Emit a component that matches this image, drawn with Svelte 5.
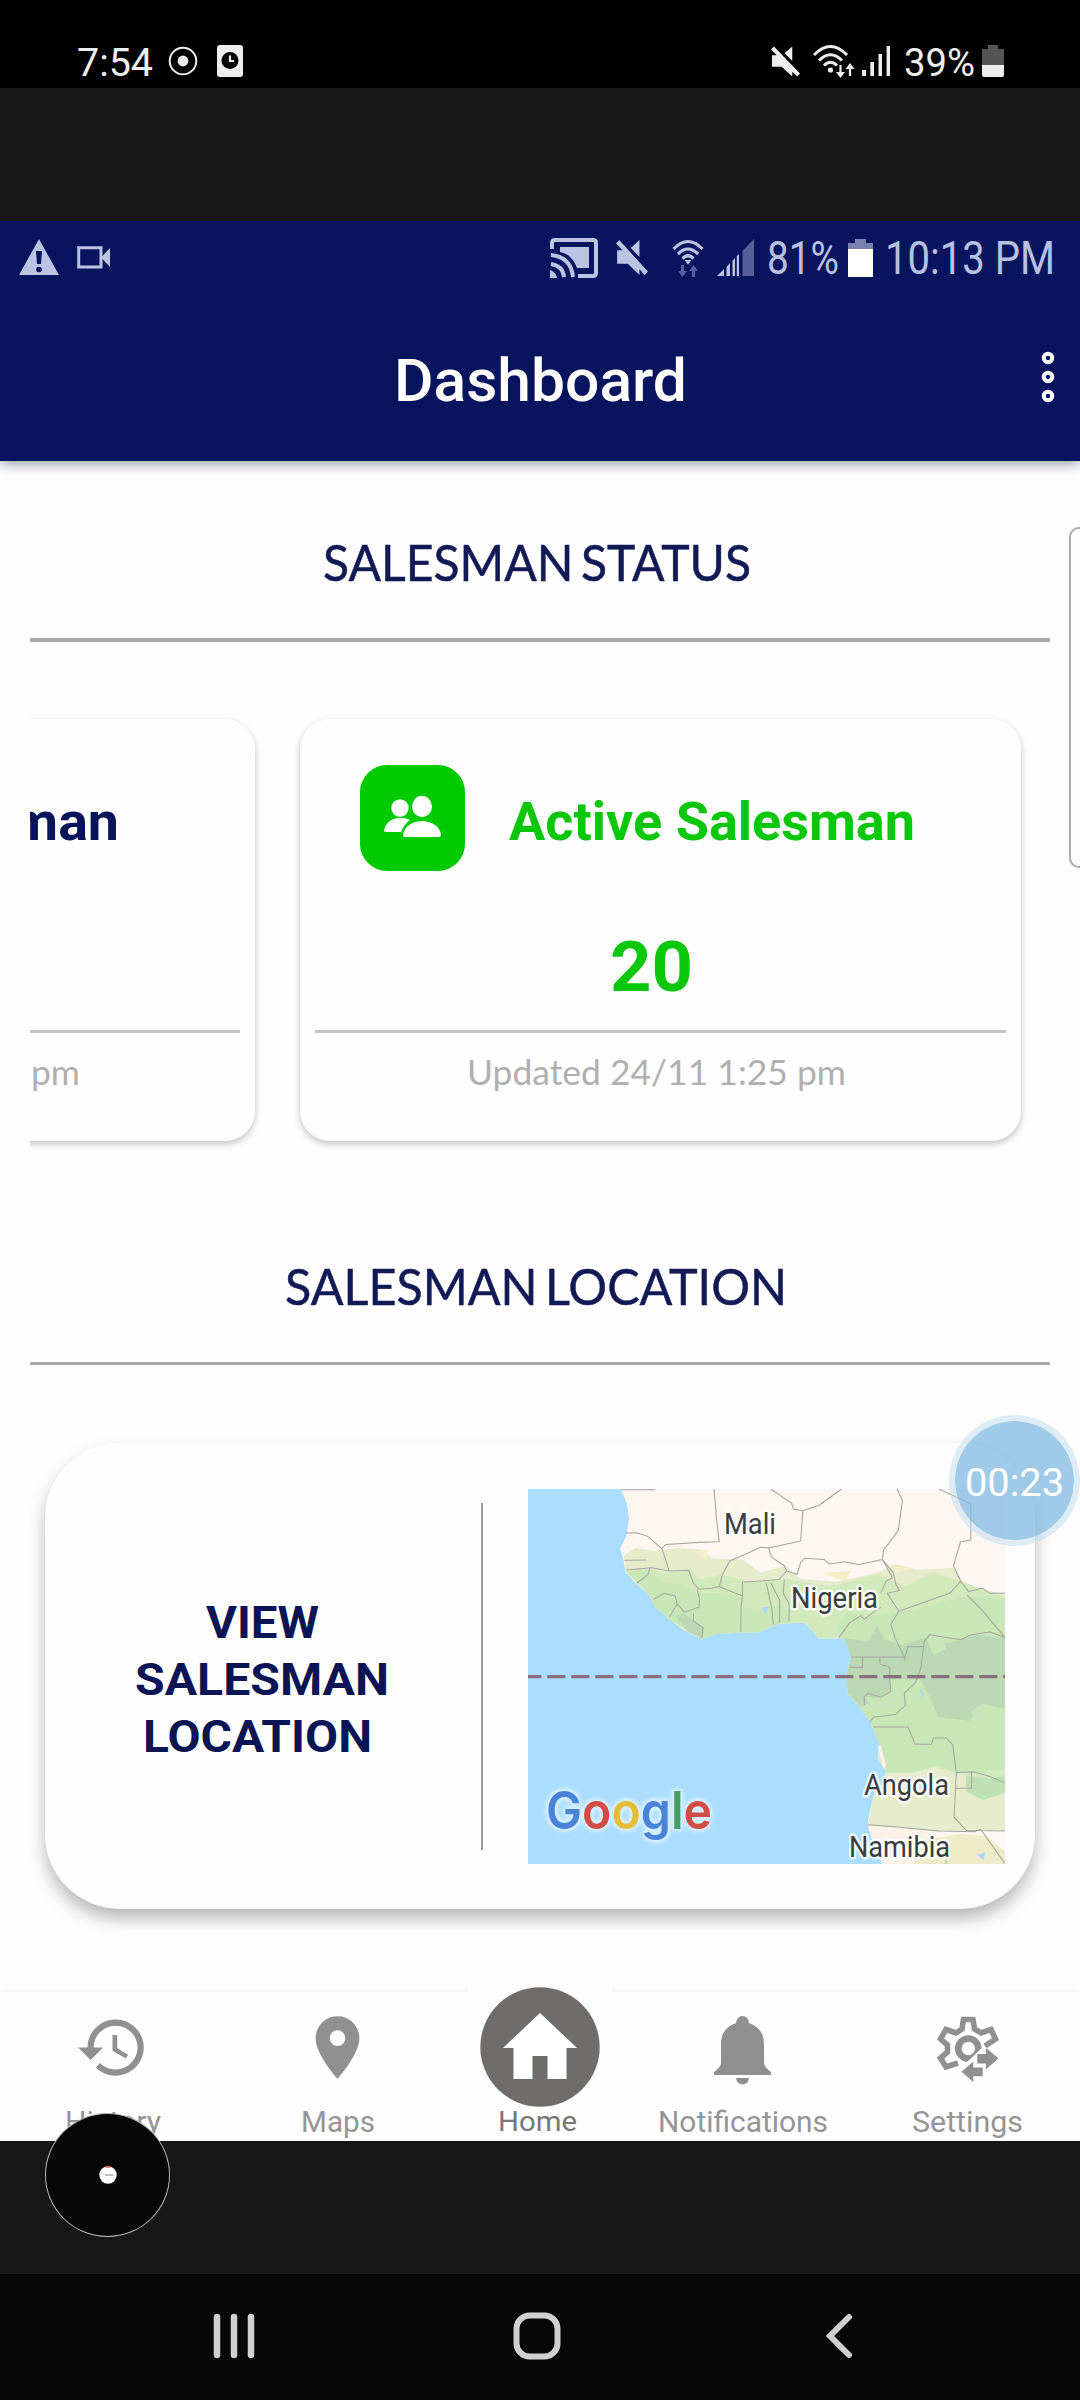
<script>
  const mutePath = 'M1 4 4 1 31 29 28 32 23 27 23 32 12 22 2 22 2 10 7 10ZM23 1 23 16 15 8Z';
</script>

{#snippet fitted(text, width, size)}
  <svg class="fitted" {width} height={Math.round(size * 1.2)}>
    <text x="0" y={size * 0.95} font-size={size} textLength={width} lengthAdjust="spacingAndGlyphs">{text}</text>
  </svg>
{/snippet}

<div class="screen">
  <header class="device-status">
    <div class="left">
      {@render fitted('7:54', 76, 39)}
      <svg class="record" width="30" height="30" viewBox="0 0 30 30">
        <circle cx="15" cy="15" r="13.3" fill="none" stroke="#eee" stroke-width="2" />
        <circle cx="15" cy="15" r="5.4" fill="#eee" />
      </svg>
      <svg class="clock" width="26" height="32" viewBox="0 0 26 32">
        <rect width="26" height="32" rx="3" fill="#eee" />
        <circle cx="13" cy="15.5" r="8.5" fill="#000" />
        <path d="M13 10.5V16H17" fill="none" stroke="#eee" stroke-width="2.2" />
      </svg>
    </div>
    <div class="right">
      <svg width="31" height="33" viewBox="0 0 32 33"><path d={mutePath} fill="#eee" /></svg>
      <svg class="wifi" width="42" height="33" viewBox="0 0 42 33" fill="none" stroke="#eee" stroke-width="3">
        <path d="M1 10Q17.500-7 34 10M6 15.500Q17.500 4 29 15.500M11 20.500Q17.500 14 24 20.500" />
        <circle cx="17.500" cy="25" r="2.600" fill="#eee" stroke="none" />
        <path d="M27.500 20V29M37 31V22" stroke-width="2.200" />
        <path d="M23 27H32L27.500 33ZM32.500 24H41.500L37 18Z" fill="#eee" stroke="none" />
      </svg>
      <svg class="bars" width="29" height="32" viewBox="0 0 29 32">
        <path d="M0 25H4V31H0ZM8.300 17H12V31H8.300ZM16.500 9H20V31H16.500ZM24.600 1H28V31H24.600Z" fill="#eee" />
      </svg>
      {@render fitted('39%', 71, 39)}
      <svg class="battery" width="22" height="34" viewBox="0 0 22 34">
        <path d="M6 1H16V5H22V21H0V5H6Z" fill="#555" />
        <path d="M0 21H22V31Q22 33 20 33H2Q0 33 0 31Z" fill="#eee" />
      </svg>
    </div>
  </header>

  <div class="letterbox top"></div>

  <main class="app">
    <div class="app-bar">
      <div class="inner-status">
        <div class="left">
          <svg width="40" height="37" viewBox="0 0 40 37">
            <path d="M20 0 40 36H0Z" fill="#bbc3e2" />
            <path d="M17 12H23L22 25H18Z" fill="#09145f" />
            <circle cx="20" cy="30.500" r="2.800" fill="#09145f" />
          </svg>
          <svg class="camera" width="33" height="23" viewBox="0 0 33 23">
            <path d="M1.700 1.700H24V21H1.700Z" fill="none" stroke="#bbc3e2" stroke-width="3" />
            <path d="M24 11.500 33 2V21Z" fill="#bbc3e2" />
          </svg>
        </div>
        <div class="right">
          <svg width="48" height="40" viewBox="0 0 48 40" fill="none" stroke="#bbc3e2" stroke-width="4">
            <path d="M2 11V5Q2 2 5 2H43Q46 2 46 5V35Q46 38 43 38H28" />
            <path d="M10 9H39V30H27Q22 16 10 14Z" fill="#bbc3e2" stroke="none" />
            <path d="M1 17Q21 19 23 39M1 26Q13 28 14 39" />
            <path d="M0 32Q6 34 7 40H0Z" fill="#bbc3e2" stroke="none" />
          </svg>
          <svg class="mute" width="34" height="37" viewBox="0 0 32 33" preserveAspectRatio="none">
            <path d={mutePath} fill="#bbc3e2" />
          </svg>
          <svg class="wifi-in" width="32" height="38" viewBox="0 0 32 38" fill="none" stroke="#bbc3e2" stroke-width="3.200">
            <path d="M1.500 10Q16-5 30.500 10M6 15Q16 5 26 15M10.500 19.500Q16 14 21.500 19.500" />
            <path d="M12.500 21H19.500L16 25.500Z" fill="#bbc3e2" stroke="none" />
            <g fill="#56609a" stroke="none">
              <path d="M9 26H12V32H15L10.500 38 6 32H9ZM20 38H23V32H26L21.500 26 17 32H20Z" />
            </g>
          </svg>
          <svg class="bars-in" width="38" height="38" viewBox="0 0 38 38">
            <path d="M0 37 7 30V37ZM9.500 28 13 24V37H9.500ZM15.500 22 18 19V37H15.500ZM19.800 17 22 15V37H19.800Z" fill="#bbc3e2" />
            <path d="M25.500 12 37 0V37H25.500Z" fill="#566098" />
          </svg>
          <span class="pct">{@render fitted('81%', 72, 46)}</span>
          <svg class="battery-in" width="25" height="38" viewBox="0 0 25 38">
            <path d="M7 0H18V4H25V11H0V4H7Z" fill="#7780af" />
            <path d="M0 10H25V38H0Z" fill="#fff" />
          </svg>
          {@render fitted('10:13 PM', 170, 46)}
        </div>
      </div>
      <div class="title-row">
        <h1>{@render fitted('Dashboard', 293, 60)}</h1>
        <svg class="kebab" width="14" height="52" viewBox="0 0 14 52" fill="#09145f" stroke="#fff" stroke-width="4">
          <circle cx="7" cy="7" r="4.200" /><circle cx="7" cy="26" r="4.200" /><circle cx="7" cy="45" r="4.200" />
        </svg>
      </div>
    </div>

    <section class="status">
      <h2>{@render fitted('SALESMAN STATUS', 428, 50)}</h2>
      <hr class="thick" />
      <div class="carousel">
        <article class="card">
          <div class="card-head previous">{@render fitted('Salesman', 246, 53)}</div>
          <div class="count"></div>
          <hr />
          <p class="updated previous">{@render fitted('Updated 24/11 1:25 pm', 379, 35)}</p>
        </article>
        <article class="card active">
          <div class="card-head">
            <div class="badge">
              <svg width="58" height="44" viewBox="0 0 58 44" fill="#fff">
                <circle cx="16" cy="13" r="8.700" />
                <path d="M0 36C1 27 10 22 18 23Q23 23 26 25Q20 29 17 37H3Q0 37 0 36Z" />
                <ellipse cx="38" cy="11.500" rx="10" ry="10.700" />
                <path d="M19 40C20 31 29 26 38 26S56 31 57 40Q57 42 54 42H22Q19 42 19 40Z" />
              </svg>
            </div>
            {@render fitted('Active Salesman', 406, 53)}
          </div>
          <div class="count">{@render fitted('20', 83, 71)}</div>
          <hr />
          <p class="updated">{@render fitted('Updated 24/11 1:25 pm', 379, 35)}</p>
        </article>
      </div>
    </section>

    <section class="location">
      <h2>{@render fitted('SALESMAN LOCATION', 502, 50)}</h2>
      <hr class="medium" />
      <div class="location-card">
        <div class="view">
          {@render fitted('VIEW', 113, 45)}
          {@render fitted('SALESMAN', 254, 45)}
          <span class="nudge">{@render fitted('LOCATION', 229, 45)}</span>
        </div>
        <div class="rule"></div>
        <svg class="map" width="477" height="375" viewBox="0 0 477 375">
          <rect width="477" height="375" fill="#abddff" />
          <g transform="scale(.36357 .34435) translate(-50 -257)">
            <path fill="#fdf6f1" d="M306 257L322 300 328 345 320 395 303 430 312 460 318 497 350 535 380 558 400 600 440 635 480 668 527 692 570 678 640 674 690 672 740 648 810 645 830 665 850 692 915 690 935 715 938 745 925 800 930 850 965 895 990 930 1018 1000 1012 1040 1035 1075 1030 1110 1000 1150 985 1220 1000 1290 1025 1346H1362V257Z" />
            <path fill="#e6eccb" d="M313 450L345 428 400 437 455 428 520 432 560 458 640 462 690 500 760 480 800 518 900 526 1010 500 1060 475 1120 492 1220 486 1245 525 1300 552 1362 560V1250L1280 1245 1180 1252 1050 1238 985 1235 1000 1150 1030 1110 1035 1075 1012 1040 1018 1000 990 930 965 895 930 850 925 800 938 745 935 715 915 690 850 692 830 665 810 645 740 648 690 672 640 674 570 678 527 692 480 668 440 635 400 600 380 558 350 535 318 497Z" />
            <path fill="#d2e9bc" d="M318 495L370 486 430 502 500 493 520 520 580 505 660 526 770 520 880 540 1010 505 1090 540 1160 500 1240 525 1362 570V1120L1230 1080 1140 1060 1035 1080 1018 1000 990 930 965 895 930 850 925 800 938 745 935 715 915 690 850 692 830 665 810 645 740 648 690 672 570 678 527 692 440 635 400 600 380 558Z" />
            <path fill="#c8e6b6" d="M325 500L375 492 420 530 475 535 520 560 590 560 645 575 640 600 690 610 750 590 770 640 740 648 690 672 570 678 527 692 440 635 400 600 380 558ZM900 660L930 610 960 632 1040 620 1120 605 1240 570 1362 575V1070L1230 1085 1180 1060 1110 1080 1035 1080 1018 1000 990 930 965 895 930 850 925 800 938 745 935 715 915 690Z" />
            <path fill="#bbd8b4" d="M920 690L985 700 1010 655 1030 695 1080 710 1140 690 1210 705 1280 680 1362 690V895L1300 880 1265 930 1180 920 1150 850 1130 810 1045 810 1045 845 1020 862 965 890 930 850 925 800 938 745ZM455 625L480 620 532 660 527 690 490 672Z" />
            <path fill="#cbe5ba" d="M1145 690L1190 675 1200 720 1165 740ZM1270 900L1308 878 1295 920 1275 935ZM1050 815L1085 850 1080 890 1025 900 1000 895 975 860 1020 865 1045 845ZM1160 920L1165 940 1155 950ZM1250 945L1268 960 1258 972Z" />
            <path fill="#bfdfb4" d="M1255 1090L1320 1100 1362 1090V1140L1300 1160 1255 1135Z" />
            <path fill="#fcf2e8" d="M985 1235L1050 1240 1150 1252 1120 1346H1025L1000 1290ZM1012 1005L1020 1000 1035 1060 1028 1070Z" />
            <path fill="#eeebc9" d="M1150 1275L1240 1258 1310 1265 1362 1310V1346H1110Z" />
            <path fill="#f6edc9" d="M510 440L545 432 540 465ZM1045 480L1110 488 1060 500ZM860 500L940 495 920 525Z" />
            <path fill="#a9d9fb" d="M693 602L712 598 705 620ZM1128 838L1140 850 1135 868ZM1285 1320L1308 1312 1303 1335Z" />
            <g fill="none" stroke="#a5a89f" stroke-width="3" stroke-linejoin="round">
              <path d="M306 259H400M562 257L568 340 576 410 520 412 430 418 418 430 380 395 350 384 318 385M418 430L428 460 438 495 492 493 505 530 520 548 555 545 575 540 640 568 636 600 635 672M576 542L585 505 605 466 640 450 690 426 712 428 800 408 806 320 780 315 775 298 718 257M806 320L850 305 912 257M712 428L720 455 755 480 762 495 740 520 640 528 640 568M762 495L790 505 800 470 812 458 865 462 880 475 920 468 960 476 1025 462 1028 435 1068 378 1080 290 1065 257M1025 462L1045 500 1052 515 1035 525 1020 560M1025 462L1055 500 1062 535 1072 552 1038 560 1070 612 1048 650 1060 690 1085 745 1000 745H938M1070 612L1150 582 1210 560 1240 525 1220 480 1240 410 1268 405V300L1180 257M1240 525L1262 555 1300 545 1320 560 1362 560M1258 565L1300 610 1362 688 1320 672 1270 680 1240 695 1155 680 1140 700 1138 715H1095L1085 755" />
              <path d="M905 688L935 645 965 625 975 635 1020 600M705 530L720 600 725 650M718 530L742 580V645M755 520L752 560 768 590V642M320 492L390 486 438 495M315 464L375 463M350 530L380 505 385 488M395 578L425 560 455 568 460 590 440 628M460 590L480 615 520 600 522 575 515 550M505 618V640L532 660 528 690M970 745V775H935M1018 745V765L1045 775V810L1048 845 1020 862 985 850 975 860V885M1138 715L1130 780 1115 820 1085 850 1088 885 1060 912 1000 920 990 935M1000 948H1095L1115 998H1160L1165 980H1200L1218 1000 1228 1080 1275 1078 1320 1092 1362 1110M1228 1080L1222 1210 1255 1248 1362 1250M1225 1126H1270V1080M985 1232L1050 1237 1180 1250 1280 1252 1295 1245 1362 1345M1200 1335V1346" />
            </g>
            <path d="M50 802H1362" stroke="#88707a" stroke-width="9" stroke-dasharray="50 16" stroke-dashoffset="13" />
          </g>
          <g class="places">
            <text x="196" y="44.500" textLength="52" lengthAdjust="spacingAndGlyphs">Mali</text>
            <text x="263" y="118.500" textLength="87" lengthAdjust="spacingAndGlyphs">Nigeria</text>
            <text x="336" y="305.500" textLength="85" lengthAdjust="spacingAndGlyphs">Angola</text>
            <text x="321" y="367.500" textLength="101" lengthAdjust="spacingAndGlyphs">Namibia</text>
          </g>
          <text class="google" x="18" y="339.500" textLength="166" lengthAdjust="spacingAndGlyphs"><tspan fill="#4a84d8">G</tspan><tspan fill="#d14e45">o</tspan><tspan fill="#e6bd38">o</tspan><tspan fill="#4a84d8">g</tspan><tspan fill="#42a062">l</tspan><tspan fill="#d14e45">e</tspan></text>
        </svg>
      </div>
    </section>

    <nav class="tabs">
      <a class="tab history" href="#history">
        <svg width="75" height="75" viewBox="0 0 24 24"><path d="M13 3c-4.970 0-9 4.030-9 9H1l3.890 3.890.070.140L9 12H6c0-3.870 3.130-7 7-7s7 3.130 7 7-3.130 7-7 7c-1.930 0-3.680-.790-4.940-2.060l-1.420 1.420C8.270 19.990 10.510 21 13 21c4.970 0 9-4.030 9-9s-4.030-9-9-9zm-1 5v5l4.280 2.540.720-1.210-3.500-2.080V8H12z" /></svg>
        {@render fitted('History', 96, 30)}
      </a>
      <a class="tab" href="#maps">
        <svg width="75" height="75" viewBox="0 0 24 24"><path d="M12 2C8.130 2 5 5.130 5 9c0 5.250 7 13 7 13s7-7.750 7-13c0-3.870-3.130-7-7-7zm0 9.500a2.500 2.500 0 0 1 0-5 2.500 2.500 0 0 1 0 5z" /></svg>
        {@render fitted('Maps', 74, 30)}
      </a>
      <a class="tab home" href="#home">
        <svg width="120" height="120" viewBox="0 0 120 120">
          <circle cx="60" cy="60" r="59.700" fill="#706c6a" />
          <path d="M60 26 97 61H86.500V92H67.500V69H52.500V92H33.500V61H23Z" fill="#fff" />
        </svg>
        {@render fitted('Home', 79, 28)}
      </a>
      <a class="tab" href="#notifications">
        <svg width="75" height="75" viewBox="0 0 75 75">
          <path d="M37.500 6Q43 6 44 13Q59 18 59 34V53Q59 57 66 62V65H9V62Q16 57 16 53V34Q16 18 31 13Q32 6 37.500 6ZM31 68H44Q43 74.500 37.500 74.500T31 68Z" />
        </svg>
        {@render fitted('Notifications', 170, 30)}
      </a>
      <a class="tab" href="#settings">
        <svg width="75" height="75" viewBox="0 0 75 75">
          <g fill="none" stroke="#909090" stroke-width="5.600">
            <path d="M28 53 16 57 10.500 48 17.500 42V35L10.500 29 16 19.500 26 23 32 19 33.500 9.500H43L44.500 19 51 23 61 19.500 65.500 29 55 36" />
            <circle cx="38.300" cy="38.500" r="10" stroke-width="6.600" />
          </g>
          <path d="M34 55 54 36 57 39 46 58Z" fill="#fefefe" />
          <path d="M47.300 44H56V38L68.500 48.500 56 59.300V53.500H47.300ZM52.700 66.300H43.300V72L31.500 61.700 43.300 51.500V57.500H52.700Z" />
        </svg>
        {@render fitted('Settings', 111, 30)}
      </a>
    </nav>

    <div class="edge-handle"></div>
    <div class="timer">{@render fitted('00:23', 99, 39)}</div>
  </main>

  <div class="letterbox bottom"></div>

  <footer class="system-nav">
    <svg width="42" height="46" viewBox="0 0 42 46" stroke="#d0d0d0" stroke-width="6.500" stroke-linecap="round">
      <path d="M4 4V42M21 4V42M38 4V42" />
    </svg>
    <svg class="sys-home" width="48" height="48" viewBox="0 0 48 48">
      <rect x="3.500" y="3.500" width="41" height="41" rx="13" fill="none" stroke="#d0d0d0" stroke-width="6" />
    </svg>
    <svg class="sys-back" width="28" height="46" viewBox="0 0 28 46" fill="none" stroke="#d0d0d0" stroke-width="6" stroke-linecap="round">
      <path d="M24 4 5 23 24 42" />
    </svg>
  </footer>

  <div class="bubble"><svg width="18" height="18" viewBox="0 0 18 18"><circle cx="9" cy="9" r="8.700" fill="#fff" /><path d="M6.500 1H11.500" stroke="#f05a55" stroke-width="1.600" /><path d="M6 9H14.500" stroke="#555" stroke-width=".8" /></svg></div>
</div>

<style>
  :global(body) { background: #171717; }
  .screen {
    position: relative;
    width: 1080px;
    height: 2400px;
    overflow: hidden;
    display: flex;
    flex-direction: column;
    background: #171717;
    font-family: Roboto, sans-serif;
  }
  svg { display: block; flex: none; }
  .fitted { overflow: visible; fill: currentColor; }
  h1, h2, p { margin: 0; font-weight: inherit; }
  hr { border: 0; margin: 0; }
  .left, .right { display: flex; align-items: center; }

  .device-status {
    box-sizing: border-box;
    height: 88px;
    padding: 44px 76px 0 77px;
    display: flex;
    justify-content: space-between;
    align-items: flex-start;
    background: #000;
    color: #eee;
  }
  .device-status .left, .device-status .right { height: 34px; }
  .device-status .fitted { margin-top: 3px; }
  .record { margin-left: 15px; }
  .clock { margin-left: 19px; }
  .wifi { margin-left: 12px; }
  .bars { margin: 0 13px 0 7px; }
  .battery { margin-left: 7px; }
  .letterbox.top { height: 133px; }
  .letterbox.bottom { height: 133px; }

  .app {
    position: relative;
    height: 1920px;
    overflow: hidden;
    display: flex;
    flex-direction: column;
    background: #fefefe;
  }
  .app-bar {
    height: 240px;
    flex: none;
    background: #09145f;
    box-shadow: 0 3px 12px rgba(20, 35, 45, .45);
  }
  .inner-status {
    display: flex;
    justify-content: space-between;
    height: 73px;
    padding: 0 25px 0 19px;
    color: #b7bfe3;
  }
  .camera { margin-left: 18px; }
  .mute { margin-left: 17px; }
  .wifi-in { margin-left: 23px; }
  .bars-in { margin: 0 12px 0 13px; }
  .battery-in { margin: 0 12px 0 9px; }
  .title-row {
    position: relative;
    height: 167px;
    box-sizing: border-box;
    display: flex;
    justify-content: center;
    padding-top: 50px;
    color: #fff;
  }
  h1 { font-weight: 500; }
  .kebab { position: absolute; right: 25px; top: 57px; }

  h2 {
    display: flex;
    justify-content: center;
    color: #111a55;
    font-family: Lato, sans-serif;
    word-spacing: -5px;
  }
  h2 text { stroke: currentColor; stroke-width: .5px; }
  .status { box-sizing: border-box; height: 756px; padding: 72px 30px 0; flex: none; }
  .status h2 { height: 105px; padding-right: 7px; }
  .thick { height: 4px; background: #a9a9a9; }
  .carousel {
    display: flex;
    justify-content: flex-end;
    gap: 45px;
    overflow: hidden;
    padding: 77px 29px 30px 0;
  }
  .card {
    box-sizing: border-box;
    flex: none;
    width: 721px;
    height: 422px;
    padding: 46px 15px 0;
    border-radius: 30px;
    background: #fefefe;
    box-shadow: 0 3px 7px rgba(0, 0, 0, .24);
  }
  .card-head {
    display: flex;
    align-items: center;
    height: 106px;
    font-weight: 700;
    padding-left: 45px;
    gap: 44px;
  }
  .card-head.previous { justify-content: flex-end; padding: 0 121px 0 0; color: #0a1458; }
  .card-head .fitted { margin-top: 7px; }
  .active { color: #0bc70b; }
  .badge {
    display: grid;
    place-items: center;
    width: 105px;
    height: 106px;
    border-radius: 27px;
    background: #00cb00;
  }
  .badge svg { margin-bottom: 2px; }
  .count {
    display: flex;
    justify-content: center;
    box-sizing: border-box;
    height: 159px;
    padding: 53px 19px 0 0;
    font-weight: 700;
  }
  .card hr { height: 3px; background: #c3c3c3; }
  .updated {
    display: flex;
    justify-content: center;
    padding: 19px 8px 0 0;
    color: #b0b0b0;
    font-family: Lato, sans-serif;
  }

  .location { box-sizing: border-box; padding: 40px 30px 0; flex: none; height: 735px; }
  .location h2 { height: 105px; padding-right: 9px; }
  .medium { height: 3px; background: #a9a9a9; }
  .location-card {
    display: flex;
    align-items: center;
    box-sizing: border-box;
    height: 466px;
    margin: 78px 15px 0;
    border-radius: 75px;
    padding-right: 30px;
    background: #fefefe;
    box-shadow: 0 10px 17px rgba(0, 0, 0, .28);
  }
  .view {
    display: flex;
    flex-direction: column;
    align-items: center;
    gap: 3px;
    width: 434px;
    padding: 6px 2px 0 0;
    font-weight: 700;
    color: #0b1454;
  }
  .nudge { margin-right: 10px; }
  .rule { width: 2px; height: 347px; background: #999; margin-right: 45px; }
  .places {
    font-size: 29px;
    fill: #3a3d3d;
    stroke: rgba(255, 255, 255, .8);
    stroke-width: 5px;
    stroke-linejoin: round;
    paint-order: stroke;
  }
  .google {
    font-family: Inter, sans-serif;
    font-size: 52px;
    font-weight: 600;
    filter: drop-shadow(0 0 2px #d9f1ff) drop-shadow(0 0 2px #d9f1ff) drop-shadow(0 0 1px #d9f1ff);
  }

  .tabs {
    flex: none;
    margin-top: 40px;
    height: 149px;
    display: grid;
    grid-template-columns: 225px 225px 180px 225px 225px;
    box-shadow: 0 -2px 6px rgba(0, 0, 0, .06);
    background: #fefefe;
  }
  .tab {
    display: flex;
    flex-direction: column;
    align-items: center;
    padding-top: 18px;
    gap: 18px;
    color: #959595;
    fill: #909090;
    text-decoration: none;
  }
  .home { position: relative; margin: -9px 18px 0; padding-top: 4px; gap: 0; background: #fefefe; color: #777; }
  .home .fitted { margin-left: -5px; margin-top: -3px; }

  .edge-handle {
    position: absolute;
    left: 1069px;
    top: 306px;
    width: 30px;
    height: 337px;
    border: 2px solid #aaa;
    border-radius: 10px;
  }
  .timer {
    position: absolute;
    box-sizing: border-box;
    left: 949px;
    top: 1194px;
    width: 131px;
    height: 131px;
    border: 6px solid rgba(195, 221, 239, .55);
    border-radius: 50%;
    background: rgba(132, 188, 227, .78);
    background-clip: padding-box;
    display: grid;
    place-items: center;
    padding-top: 3px;
    color: #fff;
  }
  .system-nav {
    box-sizing: border-box;
    display: flex;
    align-items: center;
    height: 126px;
    padding: 0 0 3px 213px;
    background: #070707;
  }
  .sys-home { margin-left: 258px; }
  .sys-back { margin-left: 264px; }
  .bubble {
    position: absolute;
    box-sizing: border-box;
    left: 45px;
    top: 2113px;
    width: 125px;
    height: 124px;
    border: 1.5px solid #b5b5b5;
    border-radius: 50%;
    background: #070707;
    display: grid;
    place-items: center;
  }
</style>
